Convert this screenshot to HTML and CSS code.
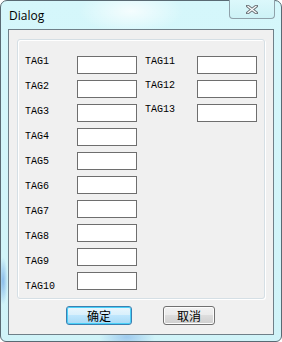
FILE: index.html
```html
<!DOCTYPE html>
<html>
<head>
<meta charset="utf-8">
<link rel="stylesheet" href="styles.css">
</head>
<body>
<div class="window">
  <div class="titlebar">
    <span class="title">Dialog</span>
    <div class="close">
      <svg width="12" height="9" viewBox="0 0 12 9">
        <path d="M1.5 1 L10.5 8 M10.5 1 L1.5 8" stroke="#6b7479" stroke-width="3.2" stroke-linecap="square" fill="none"/>
        <path d="M1.5 1 L10.5 8 M10.5 1 L1.5 8" stroke="#ffffff" stroke-width="1.2" fill="none"/>
      </svg>
    </div>
  </div>
  <div class="client">
    <div class="group">
      <div class="col labels left-labels">
        <span>TAG1</span><span>TAG2</span><span>TAG3</span><span>TAG4</span><span>TAG5</span>
        <span>TAG6</span><span>TAG7</span><span>TAG8</span><span>TAG9</span><span>TAG10</span>
      </div>
      <div class="col boxes">
        <div class="box"></div><div class="box"></div><div class="box"></div><div class="box"></div><div class="box"></div>
        <div class="box"></div><div class="box"></div><div class="box"></div><div class="box"></div><div class="box"></div>
      </div>
      <div class="col labels right-labels">
        <span>TAG11</span><span>TAG12</span><span>TAG13</span>
      </div>
      <div class="col boxes">
        <div class="box"></div><div class="box"></div><div class="box"></div>
      </div>
    </div>
    <div class="buttons">
      <div class="btn ok">确定</div>
      <div class="btn cancel">取消</div>
    </div>
  </div>
</div>
</body>
</html>
```

FILE: styles.css
```css
html, body {
  margin: 0;
  padding: 0;
  background: #ffffff;
}

.window {
  box-sizing: border-box;
  width: 282px;
  height: 342px;
  border: 1px solid #596a73;
  border-radius: 7px 7px 6px 6px;
  background:
    radial-gradient(ellipse 40px 20px at 126px 336px, rgba(120,170,230,0.55), rgba(120,170,230,0) 70%),
    radial-gradient(ellipse 6px 30px at 2px 280px, rgba(90,150,225,0.6), rgba(90,150,225,0) 80%),
    radial-gradient(ellipse 70px 30px at 130px 10px, rgba(255,255,255,0.75), rgba(255,255,255,0) 75%),
    linear-gradient(180deg, #d5f7fb 0%, #d0f3f8 100%);
  padding: 0 7px 6px 7px;
  display: flex;
  flex-direction: column;
  font-family: "Liberation Mono", monospace;
}

.titlebar {
  height: 28px;
  display: flex;
  align-items: flex-start;
  justify-content: space-between;
}

.title {
  font-family: "Open Sans", "Noto Sans", sans-serif;
  font-size: 12px;
  line-height: 16px;
  color: #000;
  margin-top: 7px;
  margin-left: 1px;
}

.close {
  box-sizing: border-box;
  width: 46px;
  height: 19px;
  margin-top: -1px;
  margin-right: -1px;
  border: 1px solid #8fa1aa;
  border-top: none;
  border-radius: 0 0 4px 4px;
  background: linear-gradient(180deg, #dcf8fb, #cdf2f6);
  display: flex;
  align-items: center;
  justify-content: center;
  padding-top: 1px;
}

.client {
  box-sizing: border-box;
  flex: 1;
  background: #f0f0f0;
  border: 1px solid #6f7f88;
  padding: 9px 8px 0 8px;
  display: flex;
  flex-direction: column;
}

.group {
  box-sizing: border-box;
  height: 260px;
  border: 1px solid #d5dfe5;
  border-radius: 3px;
  box-shadow: inset 1px 1px 0 #ffffff, 1px 1px 0 #ffffff;
  padding: 16px 0 0 7px;
  display: flex;
  align-items: flex-start;
}

.col {
  display: flex;
  flex-direction: column;
}

.labels span {
  display: block;
  height: 12px;
  font-size: 10px;
  line-height: 12px;
  color: #000;
  white-space: nowrap;
}

.left-labels {
  width: 52px;
  gap: 13px;
}

.right-labels {
  width: 52px;
  gap: 12px;
  margin-left: 8px;
}

.boxes {
  gap: 6px;
}

.box {
  box-sizing: border-box;
  width: 60px;
  height: 18px;
  background: #ffffff;
  border: 1px solid #6e6e6e;
}

.buttons {
  display: flex;
  justify-content: flex-start;
  gap: 31px;
  margin-top: 7px;
  padding-left: 49px;
}

.btn {
  box-sizing: border-box;
  height: 19px;
  border-radius: 3px;
  font-family: "Noto Sans CJK SC", sans-serif;
  font-size: 12px;
  line-height: 17px;
  text-align: center;
  color: #000;
}

.ok {
  width: 66px;
  border: 1px solid #3c7fb1;
  background: linear-gradient(180deg, #eaf6fd 0%, #d9f0fc 45%, #bee6fd 50%, #a7d9f5 100%);
  box-shadow: inset 0 0 0 1px #48d0f8;
}

.cancel {
  width: 52px;
  border: 1px solid #707070;
  background: linear-gradient(180deg, #f2f2f2 0%, #ebebeb 45%, #dddddd 50%, #cfcfcf 100%);
  box-shadow: inset 0 0 0 1px #fcfcfc;
}
```
